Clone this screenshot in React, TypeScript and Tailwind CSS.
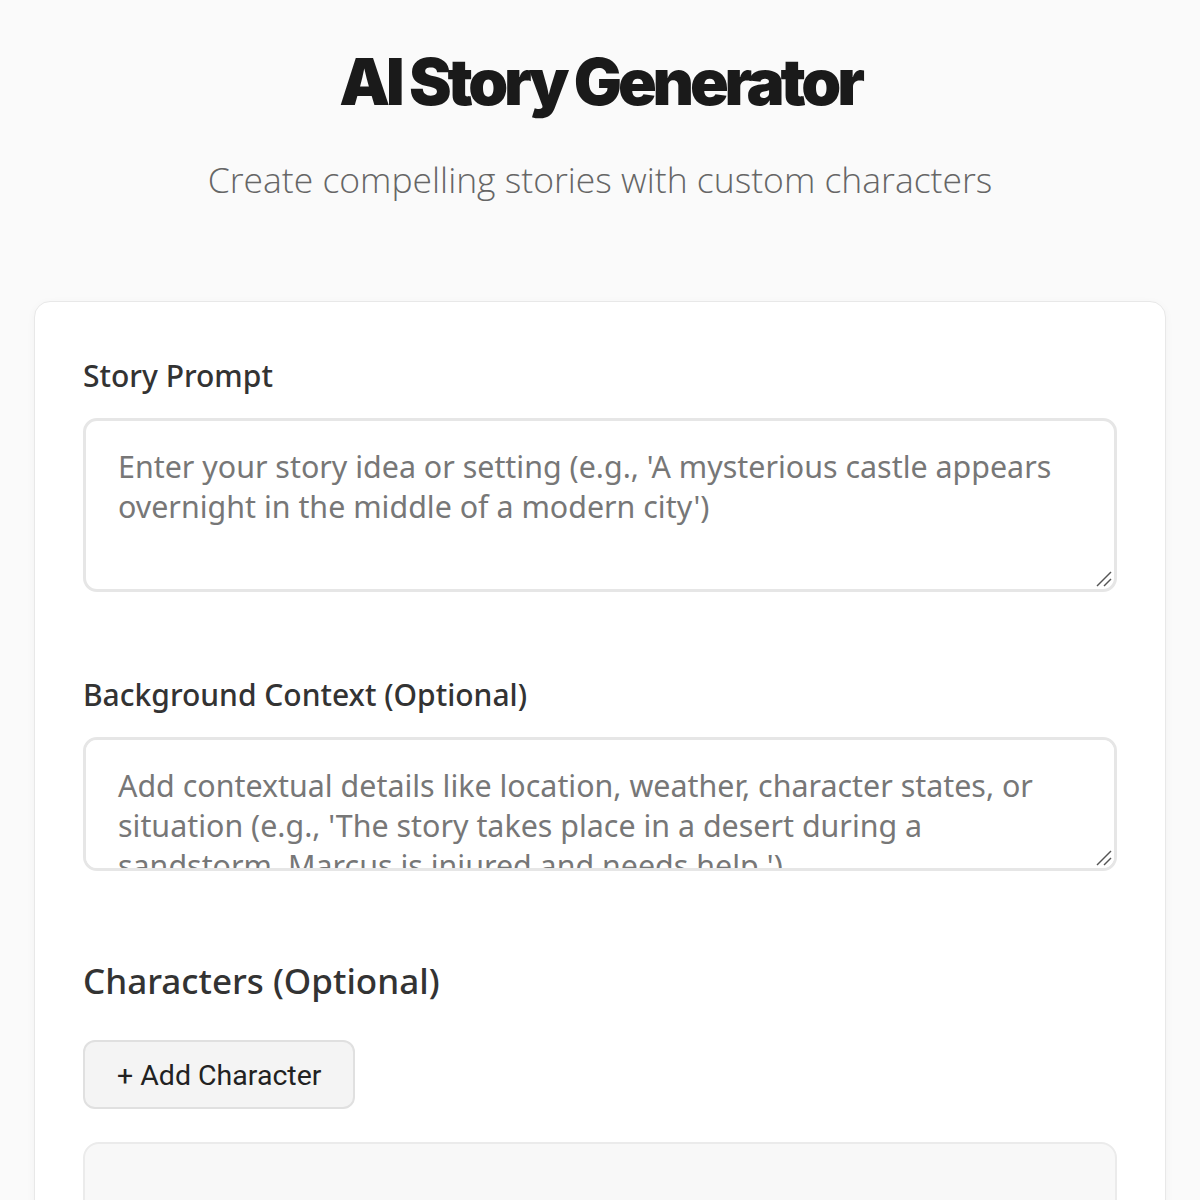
import React from "react";

function Grip() {
  return (
    <svg className="pointer-events-none absolute right-[4px] bottom-[4px]" width="18" height="18" viewBox="0 0 18 18">
      <line x1="16" y1="2" x2="2" y2="16" stroke="#555" strokeWidth="1.5" />
      <line x1="16" y1="9" x2="9" y2="16" stroke="#555" strokeWidth="1.5" />
    </svg>
  );
}

export default function App() {
  return (
    <div className="min-h-[1200px] bg-[#fafafa] px-[34px] pt-[43px]" style={{ fontFamily: "'Noto Sans', sans-serif" }}>
      <h1 className="text-center text-[64px] leading-[78px] font-black tracking-[-0.065em] text-[#1a1a1a]" style={{ fontFamily: "Inter, sans-serif" }}>
        AI Story Generator
      </h1>
      <p className="mt-[36px] text-center text-[35.5px] leading-[44px] font-light text-[#666]" style={{ fontFamily: "'Open Sans', sans-serif" }}>
        Create compelling stories with custom characters
      </p>
      <div className="mt-[100px] rounded-[16px] border border-[#e8e8e8] bg-white px-[48px] pt-[55px] pb-[40px] shadow-[0_2px_8px_rgba(0,0,0,0.04)]">
        <label className="block text-[30px] leading-[38px] font-medium text-[#333]">Story Prompt</label>
        <div className="relative mt-[23px]">
          <textarea
            className="block h-[174px] w-full resize-none rounded-[14px] border-[3px] border-[#e6e6e6] bg-white px-[32px] pt-[26px] pb-[22px] text-[30.4px] leading-[40px] text-[#333] placeholder:text-[#777] outline-none"
            placeholder="Enter your story idea or setting (e.g., 'A mysterious castle appears overnight in the middle of a modern city')"
          />
          <Grip />
        </div>
        <label className="mt-[84px] block text-[30px] leading-[38px] font-medium text-[#333]">Background Context (Optional)</label>
        <div className="relative mt-[23px]">
          <textarea
            className="block h-[134px] w-full resize-none rounded-[14px] border-[3px] border-[#e6e6e6] bg-white px-[32px] pt-[26px] pb-[22px] text-[30.4px] leading-[40px] text-[#333] placeholder:text-[#777] outline-none"
            placeholder="Add contextual details like location, weather, character states, or situation (e.g., 'The story takes place in a desert during a sandstorm. Marcus is injured and needs help.')"
          />
          <Grip />
        </div>
        <h2 className="mt-[87px] text-[35px] leading-[46px] font-medium text-[#333]">Characters (Optional)</h2>
        <button
          className="mt-[36px] block h-[69px] rounded-[12px] border-2 border-[#e0e0e0] bg-[#f4f4f4] px-[32px] pt-[3px] text-[28.5px] text-[#222]"
          style={{ fontFamily: "Roboto, sans-serif" }}
        >
          + Add Character
        </button>
        <div className="mt-[33px] h-[200px] rounded-[16px] border-2 border-[#ebebeb] bg-[#f8f8f8]" />
      </div>
    </div>
  );
}
